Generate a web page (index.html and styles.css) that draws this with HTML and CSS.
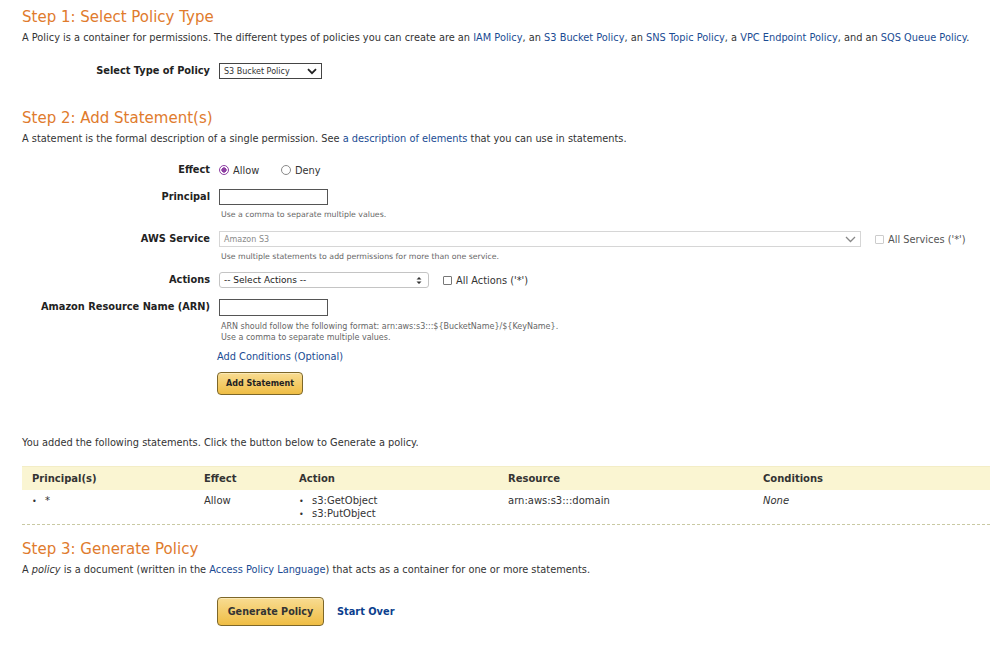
FILE: index.html
```html
<!DOCTYPE html>
<html lang="en">
<head>
    <meta charset="UTF-8">
    <meta name="viewport" content="width=device-width, initial-scale=1.0">
    <title>AWS Policy Generator</title>
    <link rel="stylesheet" href="styles.css">
</head>
<body>
    <div class="page">
        <h2 class="step">Step 1: Select Policy Type</h2>
        <p class="intro">A Policy is a container for permissions. The different types of policies you can create are an <a href="#">IAM Policy</a>, an <a href="#">S3 Bucket Policy</a>, an <a href="#">SNS Topic Policy</a>, a <a href="#">VPC Endpoint Policy</a>, and an <a href="#">SQS Queue Policy</a>.</p>

        <div class="field type-row">
            <label class="label">Select Type of Policy</label>
            <div class="ctrl">
                <div class="select plain type-select">
                    <span>S3 Bucket Policy</span>
                    <svg width="10" height="7" viewBox="0 0 10 7"><path d="M1 1.2 5 5.2 9 1.2" fill="none" stroke="#222" stroke-width="1.8"/></svg>
                </div>
            </div>
        </div>

        <h2 class="step step2">Step 2: Add Statement(s)</h2>
        <p class="intro">A statement is the formal description of a single permission. See <a href="#">a description of elements</a> that you can use in statements.</p>

        <div class="field effect-row">
            <label class="label">Effect</label>
            <div class="ctrl radios">
                <span class="radio checked"></span><span class="opt">Allow</span>
                <span class="radio"></span><span class="opt">Deny</span>
            </div>
        </div>

        <div class="field principal-row">
            <label class="label">Principal</label>
            <div class="ctrl">
                <div class="input"></div>
                <div class="hint first">Use a comma to separate multiple values.</div>
            </div>
        </div>

        <div class="field service-row">
            <label class="label">AWS Service</label>
            <div class="ctrl">
                <div class="inline">
                    <div class="select disabled service-select">
                        <span>Amazon S3</span>
                        <svg width="11" height="7" viewBox="0 0 11 7"><path d="M1 1 5.5 5.5 10 1" fill="none" stroke="#888" stroke-width="1.3"/></svg>
                    </div>
                    <span class="check off"></span><span class="check-text muted">All Services ('*')</span>
                </div>
                <div class="hint first">Use multiple statements to add permissions for more than one service.</div>
            </div>
        </div>

        <div class="field actions-row">
            <label class="label">Actions</label>
            <div class="ctrl">
                <div class="inline">
                    <div class="select round actions-select">
                        <span>-- Select Actions --</span>
                        <svg width="6" height="9" viewBox="0 0 6 9"><path d="M0.5 3.5 3 1 5.5 3.5ZM0.5 5.5 3 8 5.5 5.5Z" fill="#333"/></svg>
                    </div>
                    <span class="check"></span><span class="check-text">All Actions ('*')</span>
                </div>
            </div>
        </div>

        <div class="field arn-row">
            <label class="label">Amazon Resource Name (ARN)</label>
            <div class="ctrl">
                <div class="input"></div>
                <div class="hint first tall">ARN should follow the following format: arn:aws:s3:::${BucketName}/${KeyName}.</div>
                <div class="hint tall">Use a comma to separate multiple values.</div>
                <a href="#" class="conditions">Add Conditions (Optional)</a>
                <button class="btn small">Add Statement</button>
            </div>
        </div>

        <p class="added">You added the following statements. Click the button below to Generate a policy.</p>

        <div class="statements">
            <div class="row head">
                <div>Principal(s)</div>
                <div>Effect</div>
                <div>Action</div>
                <div>Resource</div>
                <div>Conditions</div>
            </div>
            <div class="row">
                <ul><li>*</li></ul>
                <div>Allow</div>
                <ul><li>s3:GetObject</li><li>s3:PutObject</li></ul>
                <div>arn:aws:s3:::domain</div>
                <div class="none">None</div>
            </div>
        </div>

        <h2 class="step step3">Step 3: Generate Policy</h2>
        <p class="intro">A <em>policy</em> is a document (written in the <a href="#">Access Policy Language</a>) that acts as a container for one or more statements.</p>

        <div class="generate">
            <button class="btn big">Generate Policy</button>
            <a href="#" class="start-over">Start Over</a>
        </div>
    </div>
</body>
</html>
```

FILE: styles.css
```css
body {
    margin: 0;
    background: #ffffff;
    color: #333333;
    font-family: "DejaVu Sans", Verdana, sans-serif;
    font-size: 9.8px;
}

.page {
    width: 968px;
    padding: 0 22px;
}

a {
    color: #1a4b93;
    text-decoration: none;
}

.step {
    margin: 7px 0 0;
    color: #e07b2d;
    font-size: 15px;
    font-weight: normal;
    line-height: 20px;
}

.step2 {
    margin-top: 29px;
}

.step3 {
    margin-top: 14px;
}

.intro {
    margin: 4px 0 0;
    line-height: 14px;
}

/* form rows: right aligned label column, controls to the right */
.field {
    display: grid;
    grid-template-columns: 188px 1fr;
    column-gap: 9px;
    align-items: start;
}

.label {
    text-align: right;
    font-weight: bold;
    line-height: 16px;
    color: #222222;
}

.type-row {
    margin-top: 18px;
}

.effect-row {
    margin-top: 16px;
}

.principal-row {
    margin-top: 11px;
}

.service-row {
    margin-top: 11px;
}

.actions-row {
    margin-top: 10px;
}

.arn-row {
    margin-top: 11px;
}

.ctrl {
    display: flex;
    flex-direction: column;
    align-items: flex-start;
}

.inline {
    display: flex;
    align-items: center;
}

.select {
    display: flex;
    align-items: center;
    justify-content: space-between;
    box-sizing: border-box;
    height: 16px;
    padding: 0 4px 0 4px;
    background: #ffffff;
    font-size: 8px;
}

.plain {
    border: 1px solid #444444;
}

.type-select {
    width: 103px;
}

.disabled {
    border: 1px solid #d6d6d6;
    color: #8a8a8a;
    width: 642px;
}

.round {
    border: 1px solid #c4c4c4;
    border-radius: 3px;
    width: 210px;
    font-size: 9px;
    color: #222222;
    padding-right: 6px;
}

.input {
    box-sizing: border-box;
    width: 109px;
    height: 16px;
    border: 1px solid #555555;
    background: #ffffff;
}

.arn-row .input {
    height: 17px;
}

.hint {
    margin-left: 2px;
    font-size: 7.8px;
    line-height: 10px;
    color: #666666;
}

.hint.tall {
    font-size: 8px;
    line-height: 11px;
}

.hint.first {
    margin-top: 5px;
}

.radios {
    flex-direction: row;
    align-items: center;
    height: 16px;
}

.radio {
    box-sizing: border-box;
    width: 10px;
    height: 10px;
    border: 1px solid #8a8a8a;
    border-radius: 50%;
    background: #ffffff;
}

.radio.checked {
    border-color: #8e3fa3;
    background: radial-gradient(circle, #8e3fa3 0 2.4px, #ffffff 2.9px);
}

.opt {
    margin: 0 0 0 4px;
    width: 48px;
}

.check {
    box-sizing: border-box;
    width: 9px;
    height: 9px;
    margin: 0 4px 0 14px;
    border: 1px solid #777777;
    border-radius: 1px;
}

.check.off {
    border-color: #cccccc;
}

.check-text.muted {
    color: #555555;
}

.conditions {
    margin: 7px 0 0 -2px;
    line-height: 14px;
}

.btn {
    border: 1px solid #7d6729;
    border-radius: 4px;
    background: linear-gradient(#f8dc92, #efbd44);
    box-shadow: inset 0 1px 0 #fbe9b6;
    color: #222222;
    font-family: "DejaVu Sans", Verdana, sans-serif;
    font-weight: bold;
    cursor: pointer;
    padding: 0;
}

.btn.small {
    margin: 8px 0 0 -2px;
    width: 86px;
    height: 23px;
    font-size: 8px;
}

.btn.big {
    width: 107px;
    height: 29px;
    font-size: 9.6px;
    color: #333333;
}

.added {
    margin: 41px 0 0;
    line-height: 14px;
}

/* statement table */
.statements {
    margin-top: 16px;
    border-bottom: 1px dashed #c9c9a3;
    font-size: 10px;
}

.row {
    display: grid;
    grid-template-columns: 172px 95px 209px 255px 1fr;
}

.row > * {
    margin: 0;
    padding: 0 0 0 10px;
}

.row.head {
    height: 24px;
    align-items: center;
    background: #faf5d2;
    border-top: 1px solid #f3edc6;
    box-sizing: border-box;
    font-weight: bold;
    color: #333333;
}

.row:not(.head) {
    height: 34px;
    padding-top: 5px;
    box-sizing: border-box;
    line-height: 12px;
}

.row ul {
    list-style: none;
}

.row li::before {
    content: "\2022";
    display: inline-block;
    width: 13px;
    padding-left: 4px;
    font-size: 8px;
}

.row li {
    margin-left: -4px;
}

.none {
    font-style: italic;
}

.generate {
    display: flex;
    align-items: center;
    margin: 20px 0 0 195px;
}

.start-over {
    margin-left: 13px;
    font-weight: bold;
    color: #0c3f8e;
}
```
